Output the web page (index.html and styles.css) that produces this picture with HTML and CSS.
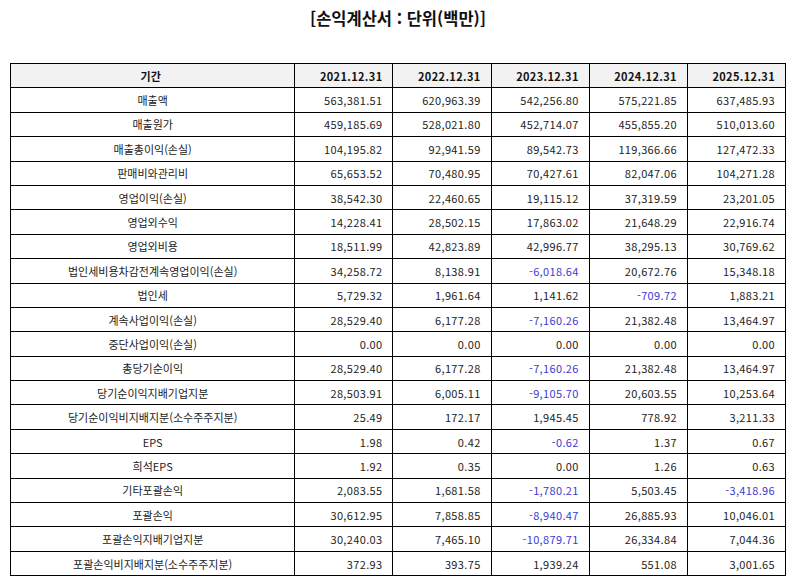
FILE: index.html
```html
<!DOCTYPE html>
<html lang="ko">
<head>
<meta charset="utf-8">
<link rel="stylesheet" href="styles.css">
</head>
<body>
<h1 class="title">[손익계산서 : 단위(백만)]</h1>
<table class="fin">
<colgroup>
<col class="c-label"><col class="c-num"><col class="c-num"><col class="c-num"><col class="c-num"><col class="c-num">
</colgroup>
<thead>
<tr><th>기간</th><th>2021.12.31</th><th>2022.12.31</th><th>2023.12.31</th><th>2024.12.31</th><th>2025.12.31</th></tr>
</thead>
<tbody>
<tr><td>매출액</td><td>563,381.51</td><td>620,963.39</td><td>542,256.80</td><td>575,221.85</td><td>637,485.93</td></tr>
<tr><td>매출원가</td><td>459,185.69</td><td>528,021.80</td><td>452,714.07</td><td>455,855.20</td><td>510,013.60</td></tr>
<tr><td>매출총이익(손실)</td><td>104,195.82</td><td>92,941.59</td><td>89,542.73</td><td>119,366.66</td><td>127,472.33</td></tr>
<tr><td>판매비와관리비</td><td>65,653.52</td><td>70,480.95</td><td>70,427.61</td><td>82,047.06</td><td>104,271.28</td></tr>
<tr><td>영업이익(손실)</td><td>38,542.30</td><td>22,460.65</td><td>19,115.12</td><td>37,319.59</td><td>23,201.05</td></tr>
<tr><td>영업외수익</td><td>14,228.41</td><td>28,502.15</td><td>17,863.02</td><td>21,648.29</td><td>22,916.74</td></tr>
<tr><td>영업외비용</td><td>18,511.99</td><td>42,823.89</td><td>42,996.77</td><td>38,295.13</td><td>30,769.62</td></tr>
<tr><td>법인세비용차감전계속영업이익(손실)</td><td>34,258.72</td><td>8,138.91</td><td class="neg">-6,018.64</td><td>20,672.76</td><td>15,348.18</td></tr>
<tr><td>법인세</td><td>5,729.32</td><td>1,961.64</td><td>1,141.62</td><td class="neg">-709.72</td><td>1,883.21</td></tr>
<tr><td>계속사업이익(손실)</td><td>28,529.40</td><td>6,177.28</td><td class="neg">-7,160.26</td><td>21,382.48</td><td>13,464.97</td></tr>
<tr><td>중단사업이익(손실)</td><td>0.00</td><td>0.00</td><td>0.00</td><td>0.00</td><td>0.00</td></tr>
<tr><td>총당기순이익</td><td>28,529.40</td><td>6,177.28</td><td class="neg">-7,160.26</td><td>21,382.48</td><td>13,464.97</td></tr>
<tr><td>당기순이익지배기업지분</td><td>28,503.91</td><td>6,005.11</td><td class="neg">-9,105.70</td><td>20,603.55</td><td>10,253.64</td></tr>
<tr><td>당기순이익비지배지분(소수주주지분)</td><td>25.49</td><td>172.17</td><td>1,945.45</td><td>778.92</td><td>3,211.33</td></tr>
<tr><td>EPS</td><td>1.98</td><td>0.42</td><td class="neg">-0.62</td><td>1.37</td><td>0.67</td></tr>
<tr><td>희석EPS</td><td>1.92</td><td>0.35</td><td>0.00</td><td>1.26</td><td>0.63</td></tr>
<tr><td>기타포괄손익</td><td>2,083.55</td><td>1,681.58</td><td class="neg">-1,780.21</td><td>5,503.45</td><td class="neg">-3,418.96</td></tr>
<tr><td>포괄손익</td><td>30,612.95</td><td>7,858.85</td><td class="neg">-8,940.47</td><td>26,885.93</td><td>10,046.01</td></tr>
<tr><td>포괄손익지배기업지분</td><td>30,240.03</td><td>7,465.10</td><td class="neg">-10,879.71</td><td>26,334.84</td><td>7,044.36</td></tr>
<tr><td>포괄손익비지배지분(소수주주지분)</td><td>372.93</td><td>393.75</td><td>1,939.24</td><td>551.08</td><td>3,001.65</td></tr>
</tbody>
</table>
</body>
</html>
```

FILE: styles.css
```css
html, body {
  margin: 0;
  padding: 0;
  background: #fff;
}
body {
  padding: 6px 8px 0 10px;
  font-family: "Noto Sans CJK KR", "Noto Sans", sans-serif;
  color: #222;
}
.title {
  margin: 0 0 33px 0;
  text-align: center;
  font-size: 16.5px;
  font-weight: bold;
  line-height: 24px;
  color: #111;
}
.fin {
  width: 776px;
  border-collapse: collapse;
  table-layout: fixed;
  font-size: 11px;
}
.c-label { width: 284px; }
.c-num { width: 98px; }
.fin th, .fin td {
  border: 1px solid #000;
  height: 23.4px;
  padding: 0 10px 0 6px;
  line-height: 14px;
  white-space: nowrap;
  letter-spacing: 0.35px;
}
.fin th {
  background: #f2f2f2;
  font-weight: bold;
  text-align: right;
  color: #111;
}
.fin th:first-child { text-align: center; letter-spacing: 0; }
.fin td { text-align: right; }
.fin td:first-child { text-align: center; letter-spacing: 0; padding-right: 6px; }
.fin td.neg { color: #3a3ad6; }
```
